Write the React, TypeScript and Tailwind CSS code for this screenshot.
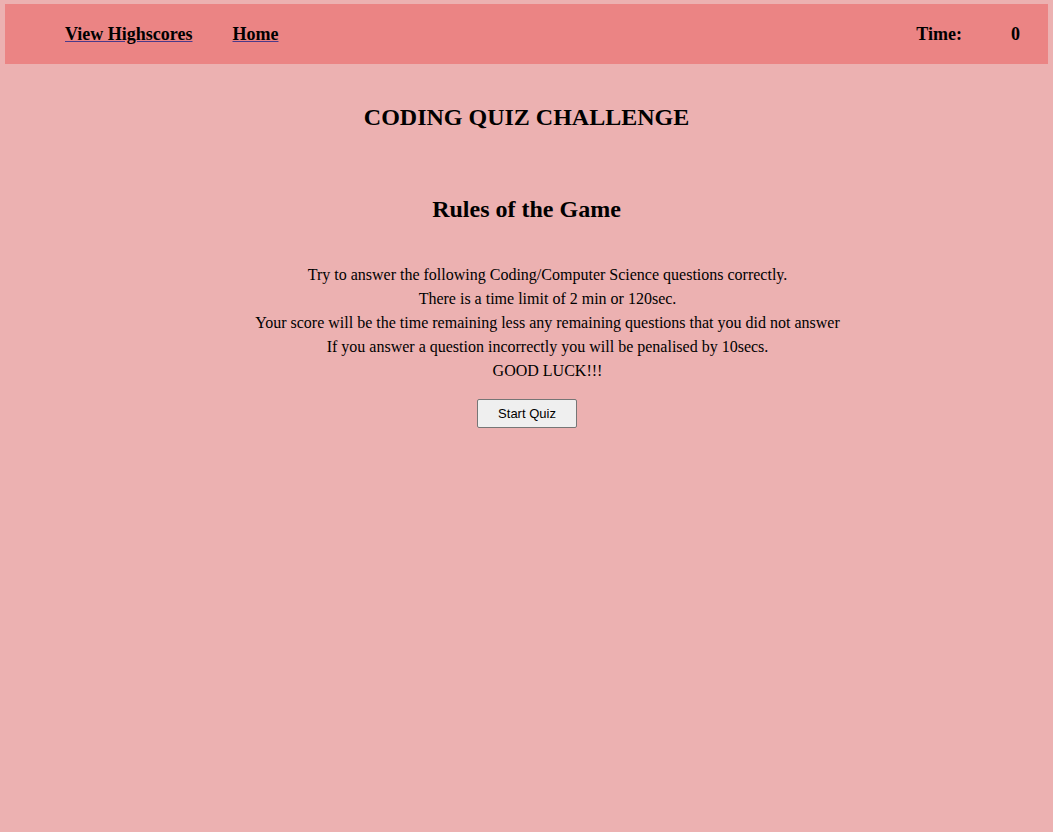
export default function App() {
  return (
    <div className="min-h-[832px] bg-[#ecb1b1] p-[4px_5px] font-['Liberation_Serif',serif] text-black">
      <header className="flex h-[60px] items-center bg-[#eb8484] pl-[60px] pr-[28px] pt-[1px]">
        <nav className="flex gap-10 text-[18px] font-bold">
          <a href="#" className="underline decoration-[#4b3a8a]">View Highscores</a>
          <a href="#" className="underline decoration-[#4b3a8a]">Home</a>
        </nav>
        <div className="ml-auto flex gap-[49px] text-[18px] font-bold">
          <span>Time:</span>
          <span>0</span>
        </div>
      </header>
      <main className="flex flex-col items-center text-center">
        <h1 className="mt-[39px] text-[24px] font-bold leading-[28px]">CODING QUIZ CHALLENGE</h1>
        <h2 className="mt-[64px] text-[24px] font-bold leading-[28px]">Rules of the Game</h2>
        <div className="mt-[40px] pl-[42px] text-[16px] leading-[24px]">
          <p>Try to answer the following Coding/Computer Science questions correctly.</p>
          <p>There is a time limit of 2 min or 120sec.</p>
          <p>Your score will be the time remaining less any remaining questions that you did not answer</p>
          <p>If you answer a question incorrectly you will be penalised by 10secs.</p>
          <p>GOOD LUCK!!!</p>
        </div>
        <button
          type="button"
          className="ml-[1px] mt-[16px] h-[29px] w-[100px] rounded-[2px] border border-[#767676] bg-[#efefef] font-['Liberation_Sans',sans-serif] text-[13px]"
        >
          Start Quiz
        </button>
      </main>
    </div>
  );
}
